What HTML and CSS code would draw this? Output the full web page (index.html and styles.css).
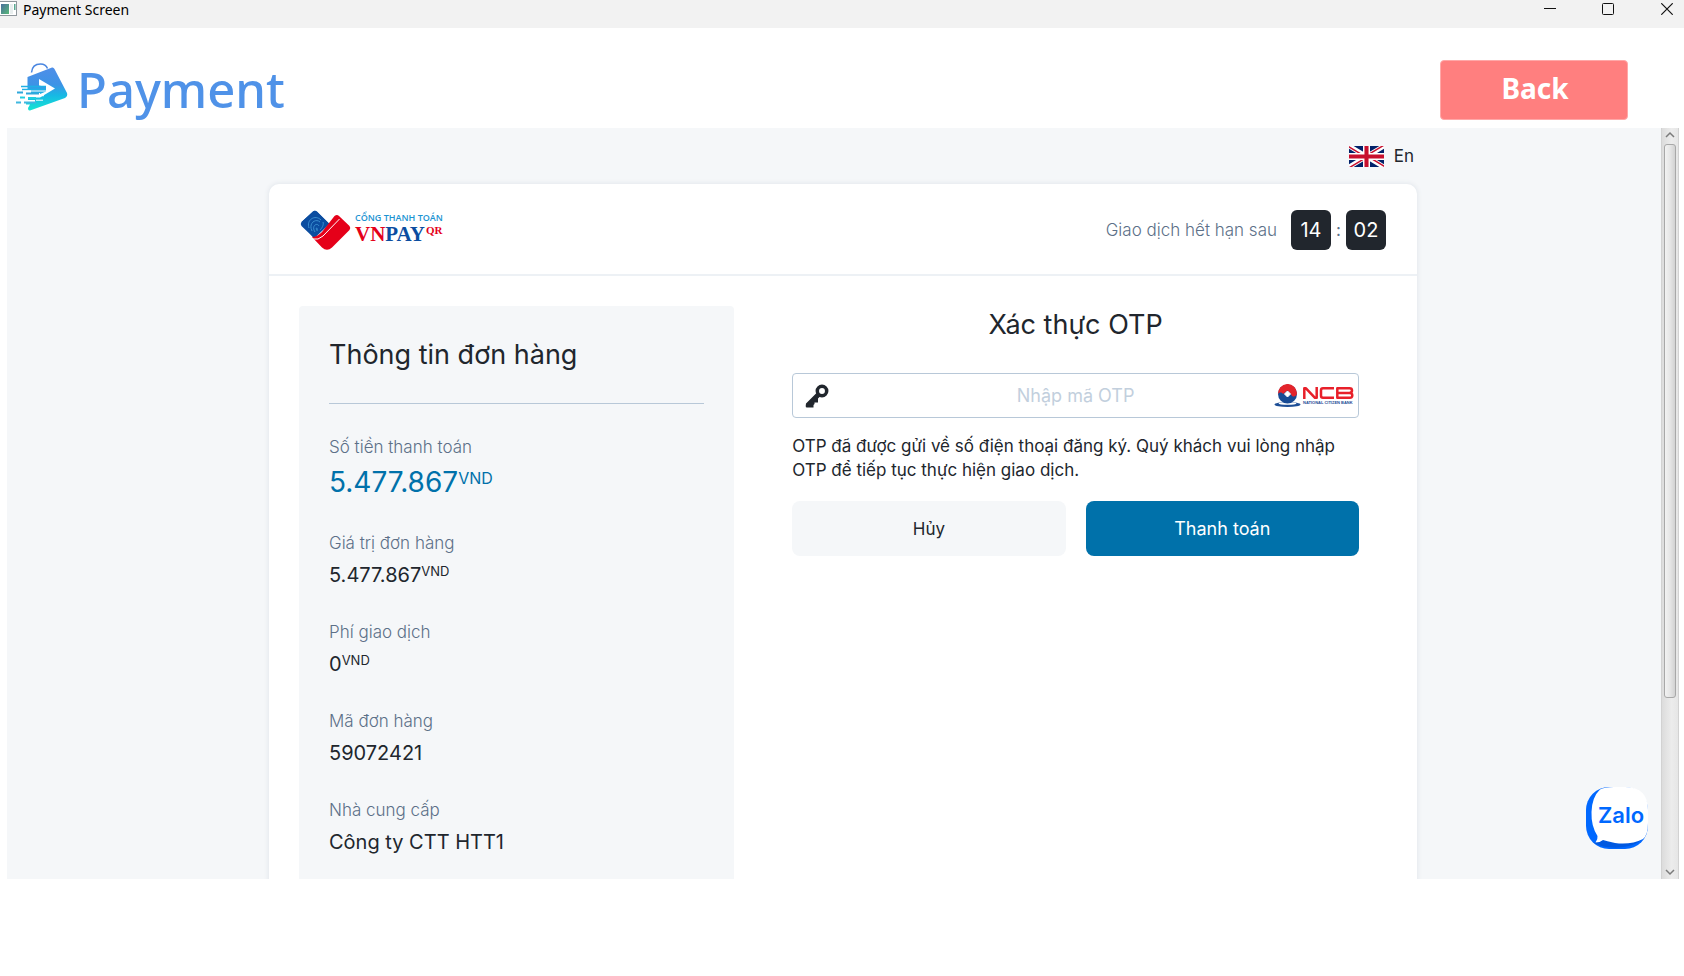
FILE: index.html
```html
<!DOCTYPE html>
<html lang="vi">
<head>
<meta charset="utf-8">
<meta name="viewport" content="width=device-width, initial-scale=1">
<title>Payment Screen</title>
<link rel="stylesheet" href="styles.css">
</head>
<body>
<div class="titlebar">
  <svg class="titlebar-icon" width="17" height="16" viewBox="0 0 17 16" aria-hidden="true">
    <defs><linearGradient id="appicon" x1="0" y1="0" x2="1" y2="1"><stop offset="0" stop-color="#4a6f9c"/><stop offset="1" stop-color="#58b878"/></linearGradient></defs>
    <rect x="-1" y="1.500" width="17.500" height="14" fill="#fff" stroke="#8f979c"/>
    <rect x="1" y="4" width="8" height="10" fill="url(#appicon)"/>
    <rect x="10" y="4" width="3" height="10" fill="#e8eeee"/>
    <rect x="14" y="4" width="1.500" height="6" fill="#58a890"/>
  </svg>
  <span class="titlebar-text">Payment Screen</span>
  <div class="window-controls">
    <button type="button" class="window-button" aria-label="Minimize"><svg width="12" height="12" viewBox="0 0 12 12"><path d="M0 5.500H12" stroke="#111" fill="none"/></svg></button>
    <button type="button" class="window-button" aria-label="Maximize"><svg width="12" height="12" viewBox="0 0 12 12"><rect x=".5" y=".5" width="11" height="11" rx="1" stroke="#111" fill="none"/></svg></button>
    <button type="button" class="window-button window-close" aria-label="Close"><svg width="12" height="12" viewBox="0 0 12 12"><path d="M.3 .3L11.700 11.700M11.700 .3L.3 11.700" stroke="#111" stroke-width="1.200" fill="none"/></svg></button>
  </div>
</div>

<header class="app-header">
  <svg class="app-logo" width="54" height="52" viewBox="0 0 54 52" aria-hidden="true">
    <defs><linearGradient id="bag" x1="0" y1="0" x2="0" y2="1"><stop offset="0" stop-color="#4f8ee8"/><stop offset=".4" stop-color="#3d93e6"/><stop offset=".65" stop-color="#17b9e4"/><stop offset="1" stop-color="#16e6d2"/></linearGradient></defs>
    <path d="M15.500 10.500C16 4.500 20 2 24.500 2C28.500 2 30.500 4 31.500 6.500" fill="none" stroke="#4a86e0" stroke-width="1.500"/>
    <path d="M11.500 15L36 5.500Q37.500 5 38.500 7L51 31Q52 34 49 36L14 48.500Q12 49 12 46L14 42.500H10V40.500H19V38H12V35.500H24V31H15V27.500H11.500Z" fill="url(#bag)"/>
    <path d="M23 17L39 26.500L24 35.500V32L30 29.500V25L23 23.500Z" fill="#fff"/>
    <path d="M5 24.500H30M6 27.500H30" stroke="#1fb0e6" stroke-width="1.500"/>
    <path d="M1 30.500H7M10 31.500H23" stroke="#2fa8dc" stroke-width="2"/>
    <path d="M4 35.500H9M12 36H20" stroke="#20cfe0" stroke-width="2"/>
    <path d="M0 40.500H5M8 40.500H20" stroke="#40b8e0" stroke-width="2"/>
    <path d="M7 33.700H28M20 38.200H27M7 29H30" stroke="#fff" stroke-width="1"/>
  </svg>
  <h1 class="app-title">Payment</h1>
  <button type="button" class="back-button">Back</button>
</header>

<div class="webview">
  <main class="page">
    <a class="language" href="#en">
      <svg width="35" height="21" viewBox="0 0 60 35" preserveAspectRatio="none" aria-hidden="true">
        <defs><clipPath id="uk"><path d="M30 17.500H60V35ZM30 17.500V35H0ZM30 17.500H0V0ZM30 17.500V0H60Z"/></clipPath></defs>
        <rect width="60" height="35" fill="#012169"/>
        <path d="M0 0L60 35M60 0L0 35" stroke="#fff" stroke-width="8"/>
        <path d="M0 0L60 35M60 0L0 35" stroke="#c8102e" stroke-width="5" clip-path="url(#uk)"/>
        <path d="M30 0V35M0 17.500H60" stroke="#fff" stroke-width="12"/>
        <path d="M30 0V35M0 17.500H60" stroke="#c8102e" stroke-width="7"/>
      </svg>
      <span>En</span>
    </a>

    <section class="card">
      <div class="card-header">
        <svg class="vnpay" width="150" height="42" viewBox="0 0 150 42" role="img" aria-label="Cổng thanh toán VNPAY QR">
          <path d="M1.500 12L13 1.500Q15 0 17 1.500L27 11.500L29.500 14L14 28.500Z" fill="#0b4da0"/>
          <path d="M1.500 12Q0 14 1.500 16L13 27L29 13.500L17 2Q15 0 13 1.500Z" fill="#0b4da0"/>
          <g fill="none" stroke="#3b8fd0" stroke-width="1"><path d="M9 18C6 10 15 4 21 10"/><path d="M12 21C8 13 16 8 20 12"/><path d="M15 22C11 16 17 12 19 16"/><path d="M17 20C15 17 18 17 17 21"/><path d="M23 12C24 15 22 18 20 20"/></g>
          <path d="M12 27Q17 27 22 22L34.500 6Q37 4 39 6L49.500 16Q51 18 49.500 20L32 37.500Q27 42 22 37.500Z" fill="#e50019"/>
          <path d="M13 29Q18 30.500 23 26L39.500 9" fill="none" stroke="#fff" stroke-width="1"/>
          <text class="vnpay-tagline" x="55" y="11">CỔNG THANH TOÁN</text>
          <text class="vnpay-name" x="55" y="31"><tspan fill="#e50019">VN</tspan><tspan fill="#0b4da0">PAY</tspan></text>
          <text class="vnpay-qr" x="126" y="24">QR</text>
        </svg>
        <div class="timer">
          <span class="timer-label">Giao dịch hết hạn sau</span>
          <span class="timer-box">14</span>
          <span class="timer-colon">:</span>
          <span class="timer-box">02</span>
        </div>
      </div>

      <div class="card-body">
        <section class="order">
          <h2 class="heading order-heading">Thông tin đơn hàng</h2>
          <dl class="order-list">
            <div class="order-item">
              <dt>Số tiền thanh toán</dt>
              <dd class="amount">5.477.867<sup>VND</sup></dd>
            </div>
            <div class="order-item">
              <dt>Giá trị đơn hàng</dt>
              <dd>5.477.867<sup>VND</sup></dd>
            </div>
            <div class="order-item">
              <dt>Phí giao dịch</dt>
              <dd>0<sup>VND</sup></dd>
            </div>
            <div class="order-item">
              <dt>Mã đơn hàng</dt>
              <dd>59072421</dd>
            </div>
            <div class="order-item">
              <dt>Nhà cung cấp</dt>
              <dd>Công ty CTT HTT1</dd>
            </div>
          </dl>
        </section>

        <form class="otp">
          <h2 class="heading otp-heading">Xác thực OTP</h2>
          <div class="otp-field">
            <svg class="key" width="24" height="24" viewBox="0 0 24 24" aria-hidden="true">
              <circle cx="17" cy="7" r="4.700" fill="none" stroke="#21262d" stroke-width="3.500"/>
              <path d="M12 8.500L15.500 12L13 14.500V18.500H9.500V20L8.500 21V23.500H2Q.5 23.500 .7 22L1 19.500Z" fill="#21262d"/>
            </svg>
            <input class="otp-input" type="text" placeholder="Nhập mã OTP" aria-label="Nhập mã OTP">
            <svg class="ncb" width="80" height="24" viewBox="0 0 80 24" role="img" aria-label="NCB National Citizen Bank">
              <ellipse cx="13.500" cy="20.500" rx="13" ry="2.500" fill="#1d4e96"/>
              <ellipse cx="13.500" cy="19.500" rx="9" ry="1.300" fill="#fff"/>
              <circle cx="13.500" cy="10" r="9.500" fill="#174a94"/>
              <path d="M4 10A9.500 9.500 0 0 1 23 9C23 13 18 14 17 10L13.500 6.500L9 10C8 8 5 8 4 10Z" fill="#e3242b"/>
              <path d="M13.500 7L16.500 10L13.500 13L10.500 10Z" fill="#fff" stroke="#fff" stroke-linejoin="round"/>
              <g fill="none" stroke="#e8202a" stroke-width="2.500" stroke-linejoin="round"><path d="M30.300 15V4.300H32L41 13.800H42.700V3"/><path d="M60 4.300H49Q47 4.300 47 6.300V11.700Q47 13.700 49 13.700H60"/><path d="M63.300 9H75.500Q78.300 9 78.300 11.500T75.500 13.800H63.300V4.300H75.500Q78 4.300 78 6.500T75.500 9"/></g>
              <text class="ncb-caption" x="29" y="20">NATIONAL CITIZEN BANK</text>
            </svg>
          </div>
          <p class="otp-note">OTP đã được gửi về số điện thoại đăng ký. Quý khách vui lòng nhập OTP để tiếp tục thực hiện giao dịch.</p>
          <div class="otp-actions">
            <button type="button" class="button">Hủy</button>
            <button type="submit" class="button button-primary">Thanh toán</button>
          </div>
        </form>
      </div>
    </section>
  </main>

  <button type="button" class="zalo" aria-label="Zalo">
    <svg width="62" height="62" viewBox="0 0 62 62">
      <rect width="62" height="62" rx="23" fill="#0068ff"/>
      <path d="M8 56C20 63 48 63 58 50L50 45L20 50Z" fill="#0058e0"/>
      <path d="M14 2.500Q18 0 28 0H39Q62 0 62 23V36Q62 48 57 52Q45 58 29 56Q20 54 17 53Q14 55.500 9.500 55.500Q12 52 11.500 49Q5 39 5.500 25Q6 10 14 2.500Z" fill="#fff"/>
      <text class="zalo-text" x="12" y="36">Zalo</text>
    </svg>
  </button>

  <div class="scrollbar" aria-hidden="true">
    <svg width="16" height="16" viewBox="0 0 16 16"><path d="M4 9L8 5L12 9" fill="none" stroke="#7b7b7b" stroke-width="1.500"/></svg>
    <div class="scroll-track"><div class="scroll-thumb"></div></div>
    <svg width="16" height="16" viewBox="0 0 16 16"><path d="M4 7L8 11L12 7" fill="none" stroke="#7b7b7b" stroke-width="1.500"/></svg>
  </div>
</div>
</body>
</html>
```

FILE: styles.css
```css
* {
  box-sizing: border-box;
}

body {
  margin: 0;
  height: 100vh;
  display: flex;
  flex-direction: column;
  background: #fff;
  color: #21262d;
  font-family: Inter, "Noto Sans", sans-serif;
  overflow: hidden;
}

h1,
h2,
p,
dl,
dd {
  margin: 0;
  font-weight: 400;
}

button,
input {
  font: inherit;
  color: inherit;
}

button {
  border: 0;
  padding: 0;
  background: none;
  cursor: pointer;
}

svg {
  display: block;
  flex: none;
}

/* Window title bar */
.titlebar {
  display: flex;
  align-items: flex-start;
  height: 28px;
  flex: none;
  background: #f2f2f2;
}

.titlebar-text {
  margin-left: 6px;
  color: #000;
  font: 14px/20px "Noto Sans", sans-serif;
}

.window-controls {
  display: flex;
  margin-left: auto;
}

.window-button {
  display: flex;
  justify-content: center;
  width: 58px;
  height: 28px;
  padding-top: 3px;
}

.window-close {
  width: 47px;
  padding-left: 13px;
}

/* Application header */
.app-header {
  display: flex;
  align-items: center;
  flex: none;
  height: 100px;
  padding: 24px 56px 0 16px;
}

.app-logo {
  align-self: flex-start;
  margin-top: 10px;
}

.app-title {
  margin-left: 7px;
  padding-bottom: 2px;
  color: #4f92e8;
  font: 500 49px/70px "Noto Sans", sans-serif;
}

.back-button {
  width: 188px;
  height: 60px;
  margin-left: auto;
  padding: 0 0 4px 2px;
  border: 1px solid #ffa8a8;
  border-radius: 4px;
  background: #ff7f7f;
  color: #fff;
  font: 700 28px/40px "Noto Sans", sans-serif;
}

/* Embedded payment page */
.webview {
  position: relative;
  flex: 1;
  min-height: 0;
  margin: 0 5px 97px 7px;
  overflow: hidden;
  background: #f5f7f9;
}

.page {
  width: 100%;
  max-width: 1148px;
  margin: 0 auto;
}

.language {
  display: flex;
  align-items: center;
  justify-content: flex-end;
  gap: 10px;
  height: 56px;
  padding-right: 3px;
  color: inherit;
  font-size: 17px;
  text-decoration: none;
}

.card {
  min-height: 800px;
  border-radius: 10px;
  background: #fff;
  box-shadow: 0 0 4px 1px #e4e8ed;
}

.card-header {
  display: flex;
  align-items: center;
  justify-content: space-between;
  height: 92px;
  padding: 0 31px;
  border-bottom: 2px solid #edf1f5;
}

.vnpay {
  margin-top: 4px;
}

.timer {
  display: flex;
  align-items: center;
  padding-top: 1px;
  color: #5c7088;
  font-size: 17px;
}

.timer-label {
  margin-right: 14px;
  font-weight: 300;
}

.timer-box {
  width: 40px;
  border-radius: 6px;
  background: #21262d;
  color: #fff;
  font-size: 20px;
  line-height: 40px;
  text-align: center;
}

.timer-colon {
  width: 15px;
  text-align: center;
}

.vnpay-tagline {
  fill: #1b93d2;
  font: 600 9px "Open Sans", sans-serif;
}

.vnpay-name {
  font: 700 21px "Liberation Serif", serif;
}

.vnpay-qr {
  fill: #e50019;
  font: 700 11px "Liberation Serif", serif;
}

.card-body {
  display: flex;
  padding: 30px;
}

.heading {
  font-size: 27px;
  line-height: 38px;
}

/* Order details */
.order {
  flex: 0 0 40%;
  min-height: 640px;
  padding: 30px;
  border-radius: 4px;
  background: #f5f7f9;
}

.order-heading {
  padding-bottom: 29px;
  border-bottom: 1px solid #b8c8d8;
}

.order-list {
  display: grid;
  gap: 29px;
  padding-top: 30px;
  font-size: 20px;
  line-height: 30px;
}

.order-list dt {
  margin-bottom: 3px;
  color: #5c7088;
  font-size: 17px;
  font-weight: 300;
  line-height: 27px;
}

.order-list sup {
  font-size: 13px;
  line-height: 0;
  vertical-align: 6px;
}

.order-list .amount {
  color: #0071aa;
  font-size: 28px;
  line-height: 37px;
}

.order-list .amount sup {
  font-size: 16px;
  vertical-align: 8px;
}

/* OTP form */
.otp {
  flex: 1;
  min-width: 0;
  padding: 0 28px 0 58px;
}

.otp-heading {
  text-align: center;
}

.otp-field {
  position: relative;
  margin-top: 29px;
}

.otp-input {
  display: block;
  width: 100%;
  height: 45px;
  padding: 0 88px;
  border: 1px solid #b8c8d8;
  border-radius: 4px;
  background: #fff;
  font-size: 18px;
  text-align: center;
}

.otp-input::placeholder {
  color: #c2cfdd;
  opacity: 1;
}

.key {
  position: absolute;
  top: 11px;
  left: 13px;
}

.ncb {
  position: absolute;
  top: 11px;
  right: 5px;
}

.ncb-caption {
  fill: #1d4e96;
  font: 700 4px "Liberation Sans", sans-serif;
}

.otp-note {
  margin-top: 16px;
  font-size: 17px;
  line-height: 24px;
}

.otp-actions {
  display: grid;
  grid-template-columns: 1fr 1fr;
  gap: 20px;
  margin-top: 19px;
}

.button {
  height: 55px;
  border-radius: 8px;
  background: #f5f7f9;
  font-size: 17px;
}

.button-primary {
  background: #0071aa;
  color: #fff;
  font-size: 18px;
}

/* Overlays */
.zalo {
  position: absolute;
  right: 31px;
  bottom: 30px;
}

.zalo-text {
  fill: #0068ff;
  font: 600 22px Inter, sans-serif;
}

.scrollbar {
  position: absolute;
  top: 0;
  right: 0;
  bottom: 0;
  display: flex;
  flex-direction: column;
  width: 18px;
  border-right: 1px solid #d2d2d2;
  border-left: 1px solid #d2d2d2;
  background: linear-gradient(90deg, #dcdcdc, #ececec 60%, #e6e6e6);
}

.scroll-track {
  flex: 1;
  padding: 0 2px;
}

.scroll-thumb {
  height: 77%;
  border: 1px solid #a8a8a8;
  border-radius: 3px;
  background: linear-gradient(90deg, #f2f2f2, #e6e6e6 50%, #d2d2d2);
}
```
